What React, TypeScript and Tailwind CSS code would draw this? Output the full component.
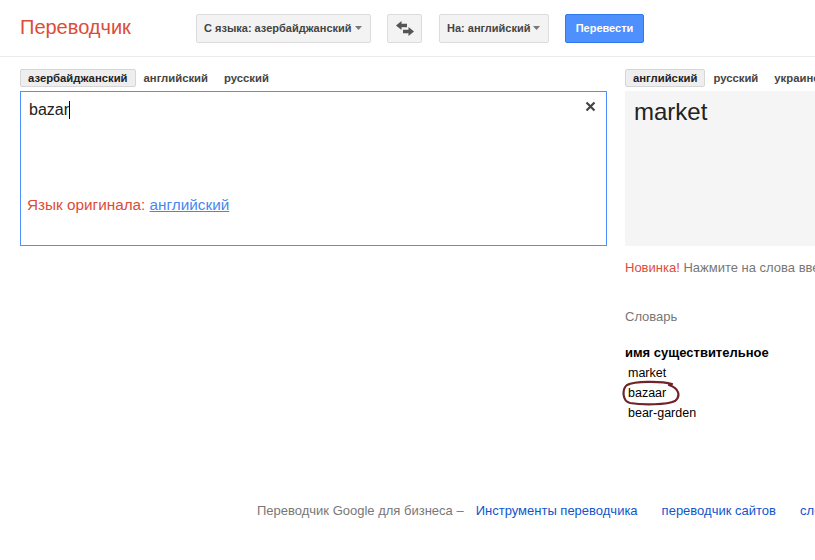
function Caret() {
  return (
    <svg width="7" height="4" viewBox="0 0 7 4" className="shrink-0">
      <path d="M0 0 L7 0 L3.5 4 Z" fill="#777" />
    </svg>
  )
}

function Tab({ label, active }: { label: string; active?: boolean }) {
  return (
    <div
      className={
        active
          ? "h-[18px] px-[7px] flex items-center text-[11.3px] font-bold text-[#222] bg-[#eeeeee] border border-[#d6d6d6] rounded-[2px]"
          : "h-[18px] px-[8px] flex items-center text-[11.3px] font-bold text-[#444]"
      }
    >
      {label}
    </div>
  )
}

export default function App() {
  return (
    <div className="w-[815px] h-[560px] overflow-hidden bg-white font-['Liberation_Sans',Arial,sans-serif]">
      {/* header */}
      <header className="h-[57px] flex items-center pl-5 border-b border-[#ebebeb]">
        <div className="w-[176px] text-[20px] text-[#dd4b39] leading-none pb-[2px]">Переводчик</div>
        <div className="flex items-center">
          <div className="h-[29px] w-[175px] pl-[7px] pr-[8px] flex items-center justify-between bg-[#f3f3f3] border border-[#dcdcdc] rounded-[2px] text-[11px] font-bold text-[#444]">
            <span>С языка: азербайджанский</span>
            <Caret />
          </div>
          <div className="ml-[16px] h-[29px] w-[35px] flex items-center justify-center bg-[#f3f3f3] border border-[#dcdcdc] rounded-[2px]">
            <svg width="18" height="15" viewBox="0 0 18 15">
              <path d="M0 4.5 L5.5 0 L5.5 2.8 L11 2.8 L11 6.2 L5.5 6.2 L5.5 9 Z" fill="#555" />
              <path d="M18 10.5 L12.5 6 L12.5 8.8 L7 8.8 L7 12.2 L12.5 12.2 L12.5 15 Z" fill="#555" />
            </svg>
          </div>
          <div className="ml-[17px] h-[29px] w-[110px] pl-[7px] pr-[8px] flex items-center justify-between bg-[#f3f3f3] border border-[#dcdcdc] rounded-[2px] text-[11px] font-bold text-[#444]">
            <span>На: английский</span>
            <Caret />
          </div>
          <div className="ml-[16px] h-[29px] w-[79px] flex items-center justify-center bg-[#4d90fe] border border-[#3079ed] rounded-[2px] text-[11px] font-bold text-white">
            Перевести
          </div>
        </div>
      </header>

      {/* main */}
      <div className="flex pl-5 gap-[18px] pt-[12px]">
        <div className="w-[587px] shrink-0">
          <div className="flex">
            <Tab label="азербайджанский" active />
            <Tab label="английский" />
            <Tab label="русский" />
          </div>
          <div className="mt-[4px] h-[155px] border border-[#4d90fe] flex flex-col">
            <div className="flex justify-between pt-[8px] pl-[8px] pr-[10px]">
              <div className="flex items-center text-[16px] text-[#222] leading-[19px]">
                bazar
                <span className="w-px h-[18px] bg-black" />
              </div>
              <svg width="11" height="11" viewBox="0 0 11 11" className="mt-[1px]">
                <path d="M1.5 1.5 L9.5 9.5 M9.5 1.5 L1.5 9.5" stroke="#444" strokeWidth="2.2" />
              </svg>
            </div>
            <div className="mt-auto pl-[6px] pb-[31px] text-[15.3px] leading-[18px] text-[#dd4b39]">
              Язык оригинала: <span className="text-[#4787ed] underline">английский</span>
            </div>
          </div>
        </div>

        <div className="w-[587px] shrink-0">
          <div className="flex">
            <Tab label="английский" active />
            <Tab label="русский" />
            <Tab label="украинский" />
          </div>
          <div className="mt-[4px] h-[155px] bg-[#f5f5f5] pt-[7px] pl-[9px]">
            <div className="text-[24px] leading-[28px] text-[#222]">market</div>
          </div>
          <div className="mt-[14px] text-[13px] leading-[16px] text-[#777] whitespace-nowrap">
            <span className="text-[#dd4b39]">Новинка!</span> Нажмите на слова введенного текста, чтобы увидеть альтернативные переводы.
          </div>
          <div className="mt-[33px] text-[13px] leading-[16px] text-[#777]">Словарь</div>
          <div className="mt-[20px] text-[13px] leading-[16px] font-bold text-black">имя существительное</div>
          <div className="mt-[2px] pl-[3px] text-[12.5px] text-black">
            <div className="h-[20px] flex items-center">market</div>
            <div className="h-[20px] flex items-center relative">
              bazaar
              <svg width="60" height="26" viewBox="0 0 60 26" className="absolute left-[-6px] top-[-3px]">
                <path
                  d="M50 4 C40 1, 12 1, 5 5 C0 9, 0 21, 8 23 C20 25, 45 25, 53 21 C59 16, 57 8, 47 5"
                  fill="none"
                  stroke="#6e2429"
                  strokeWidth="2.2"
                  strokeLinecap="round"
                />
              </svg>
            </div>
            <div className="h-[20px] flex items-center">bear-garden</div>
          </div>
        </div>
      </div>

      {/* footer */}
      <div className="mt-[80px] pl-[257px] flex text-[13px] leading-[16px] whitespace-nowrap">
        <span className="text-[#777]">Переводчик Google для бизнеса –</span>
        <span className="ml-[12px] text-[#15c]">Инструменты переводчика</span>
        <span className="ml-[24px] text-[#15c]">переводчик сайтов</span>
        <span className="ml-[24px] text-[#15c]">словарь</span>
      </div>
    </div>
  )
}
